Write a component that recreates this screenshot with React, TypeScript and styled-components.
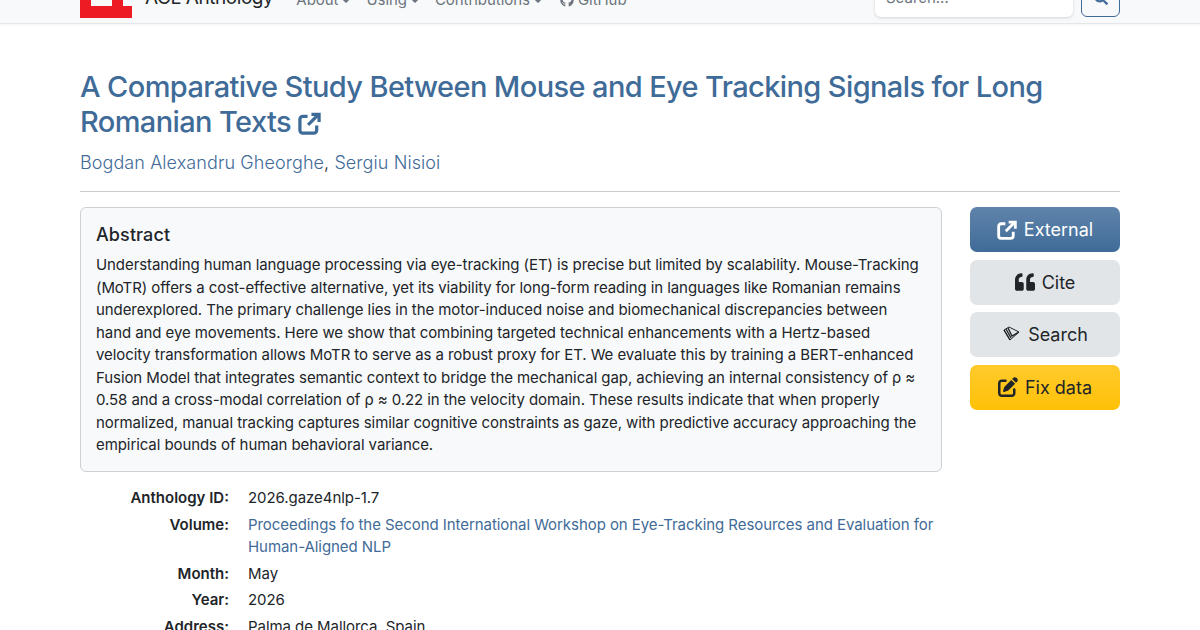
import React from "react";
import styled, { createGlobalStyle } from "styled-components";
import { FaCaretDown, FaGithub, FaQuoteLeft, FaSearch } from "react-icons/fa";
import { FaPenToSquare } from "react-icons/fa6";

const GlobalStyle = createGlobalStyle`
  html, body {
    margin: 0;
    padding: 0;
    height: 630px;
    overflow: hidden;
    background: #fff;
    font-family: Inter, "Liberation Sans", sans-serif;
    color: #212529;
  }
`;

const linkColor = "#3f6b98";

const Page = styled.div`
  width: 1200px;
  height: 630px;
  overflow: hidden;
`;

const Navbar = styled.nav`
  height: 50px;
  margin-top: -27px;
  background: #f8f9fa;
  border-bottom: 1px solid #e4e6e8;
  box-shadow: 0 1px 2px rgba(0, 0, 0, 0.05);
  display: flex;
  align-items: center;
  padding: 0 80px;
`;

const Logo = styled.svg`
  width: 52px;
  height: 40px;
  flex: none;
`;

const Brand = styled.span`
  font-size: 19px;
  letter-spacing: -0.43px;
  line-height: 24px;
  margin-left: 13px;
  color: #212529;
`;

const NavItems = styled.div`
  display: flex;
  align-items: center;
  gap: 13px;
  margin: 3px 0 0 23px;
  flex: 1;
`;

const NavItem = styled.span`
  font-size: 15px;
  letter-spacing: -0.05px;
  line-height: 22px;
  color: #6c757d;
  display: inline-flex;
  align-items: center;
  gap: 1px;
  svg {
    font-size: 14px;
  }
`;

const GithubMark = styled(FaGithub)`
  margin: 0 3px 0 2px;
`;

const SearchInput = styled.div`
  width: 198px;
  height: 38px;
  box-sizing: border-box;
  background: #fff;
  border-radius: 6px;
  box-shadow: 0 1px 3px rgba(0, 0, 0, 0.16);
  padding: 0 11px;
  font-size: 15px;
  line-height: 38px;
  color: #6c757d;
`;

const SearchButton = styled.div`
  width: 39px;
  height: 38px;
  box-sizing: border-box;
  margin-left: 8px;
  border: 1px solid ${linkColor};
  border-radius: 6px;
  color: ${linkColor};
  display: flex;
  align-items: center;
  justify-content: center;
  font-size: 14px;
`;

const Main = styled.main`
  padding: 45px 80px 0;
`;

const Title = styled.h2`
  margin: 0;
  font-size: 29px;
  letter-spacing: -0.61px;
  line-height: 35px;
  font-weight: 500;
  color: ${linkColor};
  svg {
    vertical-align: -3px;
  }
`;

const Authors = styled.p`
  margin: 10px 0 0;
  font-size: 18px;
  letter-spacing: 0.08px;
  line-height: 27px;
  font-weight: 300;
  color: ${linkColor};
  span {
    color: #212529;
  }
`;

const Rule = styled.hr`
  margin: 15px 0 15px;
  border: 0;
  border-top: 1px solid #c9cbcd;
`;

const Columns = styled.div`
  display: flex;
  justify-content: space-between;
  align-items: flex-start;
`;

const Left = styled.div`
  width: 862px;
`;

const AbstractCard = styled.div`
  box-sizing: border-box;
  height: 265px;
  background: #f8f9fa;
  border: 1px solid #ced1d4;
  border-radius: 6px;
  padding: 15px;
`;

const AbstractTitle = styled.h5`
  margin: 0 0 7px;
  font-size: 18px;
  letter-spacing: 0.1px;
  line-height: 24px;
  font-weight: 500;
`;

const AbstractText = styled.p`
  margin: 0;
  font-size: 15px;
  letter-spacing: -0.08px;
  line-height: 22.5px;
`;

const Details = styled.dl`
  margin: 15px 0 0;
  display: grid;
  grid-template-columns: 149px 1fr;
  column-gap: 19px;
  font-size: 15px;
  letter-spacing: -0.06px;
  line-height: 22.5px;
`;

const Term = styled.dt`
  text-align: right;
  font-weight: 600;
  letter-spacing: 0;
`;

const Value = styled.dd`
  margin: 0 0 4px;
  a {
    color: ${linkColor};
  }
`;

const Sidebar = styled.div`
  width: 150px;
  display: flex;
  flex-direction: column;
  gap: 7.5px;
`;

const ActionButton = styled.div<{ $kind: "primary" | "secondary" | "warning" }>`
  height: 45px;
  box-sizing: border-box;
  border-radius: 7px;
  display: flex;
  align-items: center;
  justify-content: center;
  gap: 7px;
  font-size: 18px;
  color: ${(p) => (p.$kind === "primary" ? "#fff" : "#212529")};
  background: ${(p) =>
    p.$kind === "primary"
      ? "linear-gradient(#6084ab, #3f6b98)"
      : p.$kind === "warning"
      ? "linear-gradient(#ffca2c, #ffc107)"
      : "#e2e5e8"};
  svg {
    font-size: 20px;
  }
`;

// open box with an arrow leaving its top right corner
const ExternalIcon: React.FC<{ size: number }> = ({ size }) => (
  <svg width={size} height={size} viewBox="0 0 24 24" fill="none" stroke="currentColor" strokeWidth="3.4">
    <path d="M10 4.500H5a3 3 0 0 0-3 3V19a3 3 0 0 0 3 3h11.500a3 3 0 0 0 3-3v-5" />
    <path d="M10.500 13.500L21.500 2.500" />
    <path d="M14 2.500h8v8" />
  </svg>
);

const App: React.FC = () => (
  <Page>
    <GlobalStyle />
    <Navbar>
      <Logo viewBox="0 0 52 40">
        <path fill="#ed1c24" d="M0 0H11V28H32V0H43V28H52V40H0Z" />
      </Logo>
      <Brand>ACL Anthology</Brand>
      <NavItems>
        <NavItem>About <FaCaretDown /></NavItem>
        <NavItem>Using <FaCaretDown /></NavItem>
        <NavItem>Contributions <FaCaretDown /></NavItem>
        <NavItem><GithubMark /> GitHub</NavItem>
      </NavItems>
      <SearchInput>Search...</SearchInput>
      <SearchButton><FaSearch /></SearchButton>
    </Navbar>
    <Main>
      <Title>
        A Comparative Study Between Mouse and Eye Tracking Signals for Long Romanian Texts <ExternalIcon size={23} />
      </Title>
      <Authors>
        Bogdan Alexandru Gheorghe<span>,</span> Sergiu Nisioi
      </Authors>
      <Rule />
      <Columns>
        <Left>
          <AbstractCard>
            <AbstractTitle>Abstract</AbstractTitle>
            <AbstractText>
              Understanding human language processing via eye-tracking (ET) is precise but limited by scalability. Mouse-Tracking (MoTR) offers a cost-effective alternative, yet its viability for long-form reading in languages like Romanian remains underexplored. The primary challenge lies in the motor-induced noise and biomechanical discrepancies between hand and eye movements. Here we show that combining targeted technical enhancements with a Hertz-based velocity transformation allows MoTR to serve as a robust proxy for ET. We evaluate this by training a BERT-enhanced Fusion Model that integrates semantic context to bridge the mechanical gap, achieving an internal consistency of ρ ≈ 0.58 and a cross-modal correlation of ρ ≈ 0.22 in the velocity domain. These results indicate that when properly normalized, manual tracking captures similar cognitive constraints as gaze, with predictive accuracy approaching the empirical bounds of human behavioral variance.
            </AbstractText>
          </AbstractCard>
          <Details>
            <Term>Anthology ID:</Term>
            <Value>2026.gaze4nlp-1.7</Value>
            <Term>Volume:</Term>
            <Value><a>Proceedings fo the Second International Workshop on Eye-Tracking Resources and Evaluation for Human-Aligned NLP</a></Value>
            <Term>Month:</Term>
            <Value>May</Value>
            <Term>Year:</Term>
            <Value>2026</Value>
            <Term>Address:</Term>
            <Value>Palma de Mallorca, Spain</Value>
          </Details>
        </Left>
        <Sidebar>
          <ActionButton $kind="primary"><ExternalIcon size={20} />External</ActionButton>
          <ActionButton $kind="secondary"><FaQuoteLeft />Cite</ActionButton>
          <ActionButton $kind="secondary">
            <svg width="19" height="19" viewBox="0 0 19 19" fill="none" stroke="#212529" strokeWidth="1">
              <path d="M2 5 L7 2 L17 7 L8 15 Z" />
              <path d="M2 5 L8 15 M4 4 L9 13 M6 3 L10 11 L17 7" strokeWidth="1.4" />
            </svg>
            Search
          </ActionButton>
          <ActionButton $kind="warning"><FaPenToSquare />Fix data</ActionButton>
        </Sidebar>
      </Columns>
    </Main>
  </Page>
);

export default App;
